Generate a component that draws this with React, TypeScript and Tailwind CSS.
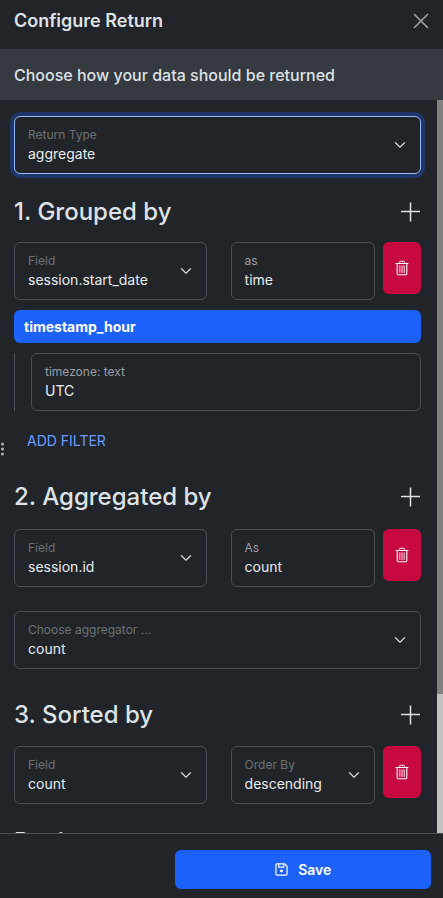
import { useId, useState, type ReactNode } from "react";
import { BsChevronDown } from "react-icons/bs";

const box = "relative flex h-[58px] min-w-0 flex-col rounded-md border px-[13px] pt-[9px]";
const idle = "border-[#495057]";
const active = "border-[#9ab8f7] ring-4 ring-[#1e3669]";

const SelectField = ({ label, value, options, focused, className = "" }: {
    label: string,
    value: string,
    options: string[],
    focused?: boolean,
    className?: string
}) => {
    const id = useId();
    const [current, setCurrent] = useState<string>(value);
    return (
        <div className={`${box} ${focused ? active : idle} ${className}`}>
            <label htmlFor={id} className="text-[12px] leading-[18px] text-[#6c7174]">{label}</label>
            <select
                id={id}
                value={current}
                onChange={(e) => setCurrent(e.target.value)}
                className="w-full appearance-none bg-transparent text-[14px] leading-5 text-[#e9ecef] outline-none"
            >
                {options.map((o) => <option key={o} value={o} className="bg-[#212529]">{o}</option>)}
            </select>
            <BsChevronDown className="pointer-events-none absolute right-[14px] top-[22px] size-3 text-[#e9ecef]" stroke="currentColor" strokeWidth={0.8} />
        </div>
    )
}

const TextField = ({ label, value, className = "" }: {
    label: string,
    value: string,
    className?: string
}) => {
    const id = useId();
    return (
        <div className={`${box} ${idle} ${className}`}>
            <label htmlFor={id} className="text-[12px] leading-[18px] text-[#9a9fa3]">{label}</label>
            <input id={id} defaultValue={value} className="w-full bg-transparent text-[14px] leading-5 text-[#e9ecef] outline-none" />
        </div>
    )
}

const SectionHeading = ({ title }: { title: string }) => (
    <div className="flex h-9 items-center justify-between">
        <h2 className="text-[24px] font-medium leading-9 text-[#dee2e6]">{title}</h2>
        <button aria-label={`Add to ${title}`} className="text-[#dee2e6]">
            <svg viewBox="0 0 20 20" className="size-5" fill="none" stroke="currentColor" strokeWidth="1.5">
                <path d="M9.5 0.5v19M0 9.5h19" />
            </svg>
        </button>
    </div>
)

const Row = ({ children }: { children: ReactNode }) => (
    <div className="flex items-start gap-2">
        <div className="grid min-w-0 flex-1 grid-cols-[4fr_3fr] gap-6">{children}</div>
        <button aria-label="Delete" className="flex h-[52px] w-[38px] shrink-0 items-center justify-center rounded-md bg-[#c80941] text-white">
            <svg viewBox="0 0 14 16" className="h-4 w-[14px]" fill="none" stroke="currentColor" strokeLinecap="round" strokeLinejoin="round">
                <path d="M1 3.5h12M4.5 3.3V2.2a.9.9 0 0 1 .9-.9h3.2a.9.9 0 0 1 .9.9v1.1" />
                <path d="M2.2 3.7v9.8a1.2 1.2 0 0 0 1.2 1.2h7.2a1.2 1.2 0 0 0 1.2-1.2V3.7" strokeWidth="1.1" />
                <path d="M4.8 5.8v6.7M7 5.8v6.7M9.2 5.8v6.7" strokeWidth="0.9" />
            </svg>
        </button>
    </div>
)

const App = () => {
    return (
        <div className="relative flex h-screen flex-col bg-[#212529] font-['Inter',sans-serif] text-[#dee2e6]">
            <header className="flex h-[49px] shrink-0 items-start justify-between px-[14px] pt-[9px]">
                <h1 className="text-[18px] font-semibold leading-6">Configure Return</h1>
                <button aria-label="Close" className="mt-1 text-[#a4a7a9]">
                    <svg viewBox="0 0 16 16" className="size-4" fill="none" stroke="currentColor" strokeWidth="1.5" strokeLinecap="round">
                        <path d="M1.5 1.5l13 13M14.5 1.5l-13 13" />
                    </svg>
                </button>
            </header>
            <p className="flex h-[51px] shrink-0 items-center bg-[#343a40] px-[14px] text-[16px] font-medium">Choose how your data should be returned</p>

            <div className="flex min-h-0 flex-1">
                <main className="flex min-w-0 flex-1 flex-col overflow-hidden pl-[14px] pr-4 pt-4">
                    <SelectField label="Return Type" value="aggregate" options={["aggregate", "session", "event"]} focused className="shrink-0" />

                    <section className="mt-5 shrink-0">
                        <SectionHeading title="1. Grouped by" />
                        <div className="mt-3">
                            <Row>
                                <SelectField label="Field" value="session.start_date" options={["session.start_date", "session.id"]} />
                                <TextField label="as" value="time" />
                            </Row>
                        </div>
                        <div className="mt-[10px] flex h-[33px] items-center rounded-md bg-[#1c62fa] px-[10px] text-[14px] font-bold text-white">timestamp_hour</div>
                        <div className="mt-[10px] border-l border-[#495057] pl-4">
                            <TextField label="timezone: text" value="UTC" />
                        </div>
                        <button className="ml-[13px] mt-5 block text-[14px] leading-5 text-[#6c9aff]">ADD FILTER</button>
                    </section>

                    <section className="mt-7 shrink-0">
                        <SectionHeading title="2. Aggregated by" />
                        <div className="mt-[14px]">
                            <Row>
                                <SelectField label="Field" value="session.id" options={["session.id", "session.start_date"]} />
                                <TextField label="As" value="count" />
                            </Row>
                        </div>
                        <SelectField label="Choose aggregator ..." value="count" options={["count", "sum", "avg", "min", "max"]} className="mt-6" />
                    </section>

                    <section className="mt-7 shrink-0">
                        <SectionHeading title="3. Sorted by" />
                        <div className="mt-[13px]">
                            <Row>
                                <SelectField label="Field" value="count" options={["count", "time"]} />
                                <SelectField label="Order By" value="descending" options={["descending", "ascending"]} />
                            </Row>
                        </div>
                    </section>

                    <section className="mt-5 shrink-0">
                        <h2 className="text-[24px] font-medium leading-9">Paging</h2>
                    </section>
                </main>
                <div className="flex w-[6px] shrink-0 flex-col bg-[#c1c1c1]">
                    <div className="h-[81%] bg-[#818181]" />
                </div>
            </div>

            <footer className="flex h-[65px] shrink-0 justify-end border-t border-[#495057] px-3 pt-4">
                <button className="flex h-[39px] w-[61%] max-w-md items-center justify-center gap-[10px] rounded-md bg-[#1c62fa] text-[14px] font-semibold text-white">
                    <svg viewBox="0 0 14 14" className="size-[13px]" fill="none" stroke="currentColor" strokeWidth="1.3" strokeLinejoin="round">
                        <path d="M1 2.2A1.2 1.2 0 0 1 2.2 1H10.5L13 3.5V11.8A1.2 1.2 0 0 1 11.8 13H2.2A1.2 1.2 0 0 1 1 11.8Z" />
                        <path d="M4 1V4.5H9.5V1" />
                        <circle cx="7" cy="8.6" r="1.6" fill="currentColor" stroke="none" />
                    </svg>
                    Save
                </button>
            </footer>

            {/* drag handle on the panel edge */}
            <div className="absolute left-[1px] top-1/2 flex -translate-y-1/2 flex-col gap-[2px]">
                <span className="size-[3px] rounded-full bg-[#adb5bd]" />
                <span className="size-[3px] rounded-full bg-[#adb5bd]" />
                <span className="size-[3px] rounded-full bg-[#adb5bd]" />
            </div>
        </div>
    )
}

export default App
